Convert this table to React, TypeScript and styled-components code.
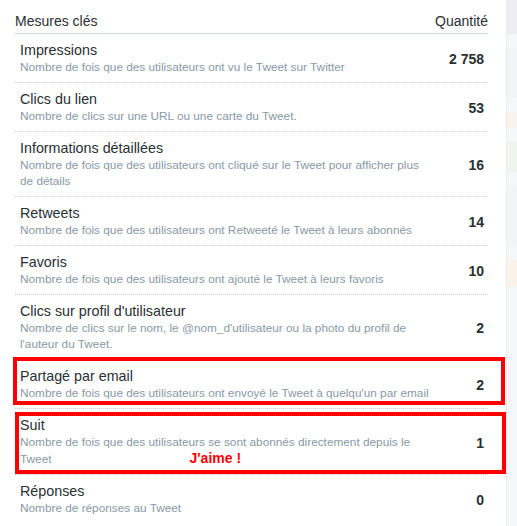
import * as React from 'react';
import styled, { createGlobalStyle } from 'styled-components';

const GlobalStyle = createGlobalStyle`
  html, body {
    margin: 0;
    padding: 0;
    background: #ffffff;
  }
  * {
    box-sizing: border-box;
  }
`

const Page = styled.div`
  display: flex;
  flex-direction: row;
  width: 517px;
  height: 526px;
  overflow: hidden;
  font-family: 'Liberation Sans', Arial, Helvetica, sans-serif;
  color: #292f33;
`

const Panel = styled.div`
  width: 507px;
  flex-shrink: 0;
  background: #ffffff;
  padding: 0 18px 0 15px;
  border-right: 1px solid #e9ebee;
`

const Backdrop = styled.div`
  flex: 1;
  display: flex;
  flex-direction: column;
  gap: 14px;
  background: #f6f7f9;
`

const Ghost = styled.div<{ h: number; tint: string }>`
  height: ${p => p.h}px;
  background: ${p => p.tint};
`

const Header = styled.div`
  display: flex;
  justify-content: space-between;
  padding: 13px 0 4px;
  font-size: 14px;
  line-height: 16px;
  border-bottom: 1px solid #ccd6dd;
`

const Row = styled.div<{ last?: boolean }>`
  position: relative;
  display: flex;
  align-items: center;
  padding: 7px 4px 7px 5px;
  border-bottom: ${p => (p.last ? 'none' : '1px dotted #c4ccd3')};
`

const Label = styled.div`
  flex: 1;
`

const Title = styled.div`
  font-size: 14.3px;
  line-height: 18px;
  color: #292f33;
`

const DescLine = styled.div`
  display: flex;
  align-items: baseline;
  font-size: 11.8px;
  line-height: 16px;
  color: #8899a6;
  white-space: nowrap;
`

const Value = styled.div`
  font-size: 14px;
  font-weight: 700;
  line-height: 18px;
  color: #292f33;
  padding-top: 2px;
`

// red annotation boxes drawn over the rows
const Mark = styled.div<{ t: number; r: number; b: number; l: number }>`
  position: absolute;
  top: ${p => p.t}px;
  right: ${p => p.r}px;
  bottom: ${p => p.b}px;
  left: ${p => p.l}px;
  border: 4px solid #ff0000;
  pointer-events: none;
`

const Note = styled.span<{ gap: number }>`
  margin-left: ${p => p.gap}px;
  font-size: 14px;
  line-height: 16px;
  font-weight: 700;
  color: #ff0000;
`

interface Metric {
  title: string,
  desc: string[],
  value: string,
  mark?: { t: number, r: number, b: number, l: number },
  note?: string,
}

const metrics: Metric[] = [
  { title: 'Impressions', desc: ['Nombre de fois que des utilisateurs ont vu le Tweet sur Twitter'], value: '2 758' },
  { title: 'Clics du lien', desc: ['Nombre de clics sur une URL ou une carte du Tweet.'], value: '53' },
  { title: 'Informations détaillées', desc: ['Nombre de fois que des utilisateurs ont cliqué sur le Tweet pour afficher plus', 'de détails'], value: '16' },
  { title: 'Retweets', desc: ['Nombre de fois que des utilisateurs ont Retweeté le Tweet à leurs abonnés'], value: '14' },
  { title: 'Favoris', desc: ['Nombre de fois que des utilisateurs ont ajouté le Tweet à leurs favoris'], value: '10' },
  { title: "Clics sur profil d'utilisateur", desc: ["Nombre de clics sur le nom, le @nom_d'utilisateur ou la photo du profil de", "l'auteur du Tweet."], value: '2' },
  {
    title: 'Partagé par email',
    desc: ["Nombre de fois que des utilisateurs ont envoyé le Tweet à quelqu'un par email"],
    value: '2',
    mark: { t: -3, r: -17, b: 3, l: -2 },
  },
  {
    title: 'Suit',
    desc: ['Nombre de fois que des utilisateurs se sont abonnés directement depuis le', 'Tweet'],
    value: '1',
    mark: { t: 3, r: -18, b: 0, l: 0 },
    note: "J'aime !",
  },
  { title: 'Réponses', desc: ['Nombre de réponses au Tweet'], value: '0' },
]

export default class App extends React.PureComponent {
  public render() {
    return (
      <Page>
        <GlobalStyle />
        <Panel>
          <Header>
            <span>Mesures clés</span>
            <span>Quantité</span>
          </Header>
          {metrics.map((m, i) => (
            <Row key={m.title} last={i === metrics.length - 1}>
              <Label>
                <Title>{m.title}</Title>
                {m.desc.map((line, j) => (
                  <DescLine key={j}>
                    <span>{line}</span>
                    {m.note && j === m.desc.length - 1 && <Note gap={138}>{m.note}</Note>}
                  </DescLine>
                ))}
              </Label>
              <Value>{m.value}</Value>
              {m.mark && <Mark {...m.mark} />}
            </Row>
          ))}
        </Panel>
        <Backdrop>
          <Ghost h={34} tint="#eeedf4" />
          <Ghost h={50} tint="#f2f3f5" />
          <Ghost h={16} tint="#f8f1ec" />
          <Ghost h={30} tint="#edf5ed" />
          <Ghost h={60} tint="#f3f4f6" />
          <Ghost h={26} tint="#fbf3ea" />
        </Backdrop>
      </Page>
    );
  }
}
